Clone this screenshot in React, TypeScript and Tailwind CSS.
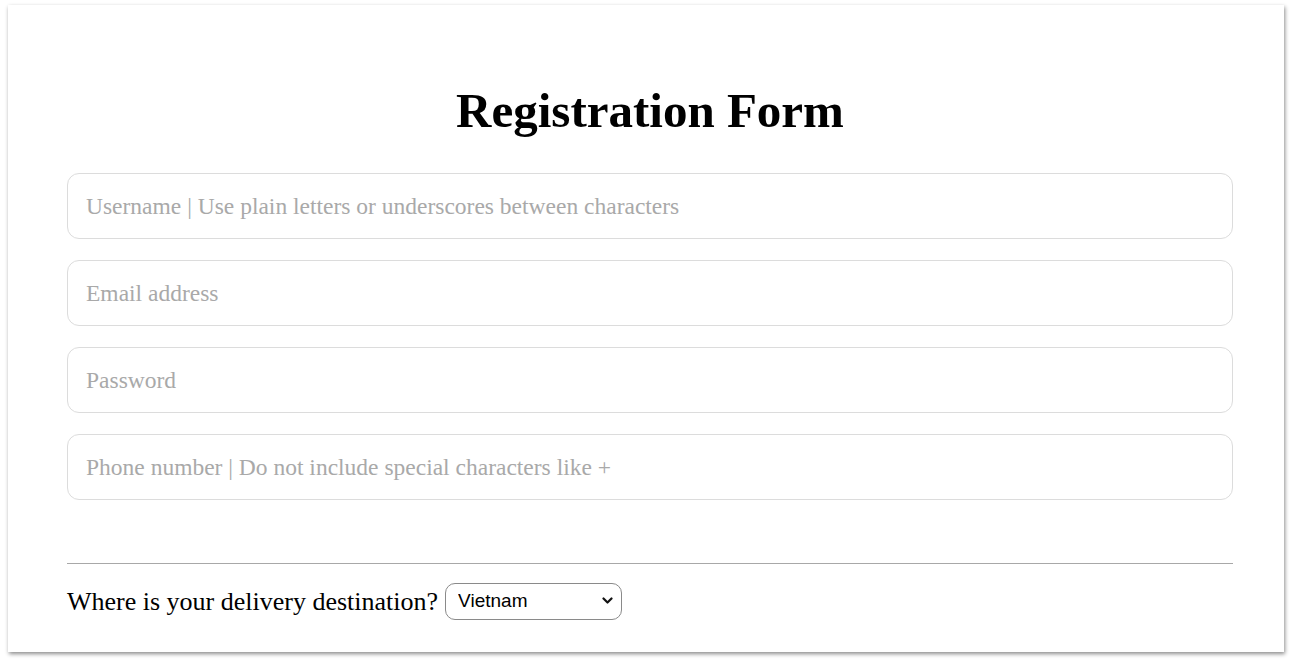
const fields = [
  { type: "text", placeholder: "Username | Use plain letters or underscores between characters" },
  { type: "email", placeholder: "Email address" },
  { type: "password", placeholder: "Password" },
  { type: "tel", placeholder: "Phone number | Do not include special characters like +" },
];

export default function App() {
  return (
    <div className="min-h-screen bg-white pt-[5px] px-2 font-['Liberation_Serif',serif]">
      <div className="bg-white shadow-[1px_2px_4px_rgba(0,0,0,0.45)] pl-[59px] pr-[51px] pt-[81px] pb-[31px]">
        <h1 className="text-center text-[49px] font-bold leading-none text-black">Registration Form</h1>

        <form className="mt-[38px] flex flex-col gap-[21px]">
          {fields.map((f) => (
            <input
              key={f.placeholder}
              type={f.type}
              placeholder={f.placeholder}
              className="h-[66px] w-full rounded-xl border border-[#dcdcdc] px-[18px] text-[23.5px] text-black placeholder:text-[#a9a9a9] outline-none"
            />
          ))}
        </form>

        <hr className="mt-[63px] border-t border-[#a8a8a8]" />

        <div className="mt-[18px] flex items-center gap-[7px]">
          <label className="text-[26px] text-black">Where is your delivery destination?</label>
          <div className="relative">
            <select
              defaultValue="Vietnam"
              className="h-[37px] w-[177px] appearance-none rounded-[10px] border border-[#8a8a8a] bg-white pl-[12px] pr-6 text-[19px] font-['Liberation_Sans',Arial,sans-serif] text-black"
            >
              <option>Vietnam</option>
              <option>Japan</option>
              <option>Singapore</option>
              <option>United States</option>
            </select>
            <svg
              className="pointer-events-none absolute right-[9px] top-[14px]"
              width="11"
              height="8"
              viewBox="0 0 11 8"
              fill="none"
            >
              <path d="M1.5 1.5L5.5 5.5L9.5 1.5" stroke="#111" strokeWidth="2.2" strokeLinecap="round" strokeLinejoin="round" />
            </svg>
          </div>
        </div>
      </div>
    </div>
  );
}
